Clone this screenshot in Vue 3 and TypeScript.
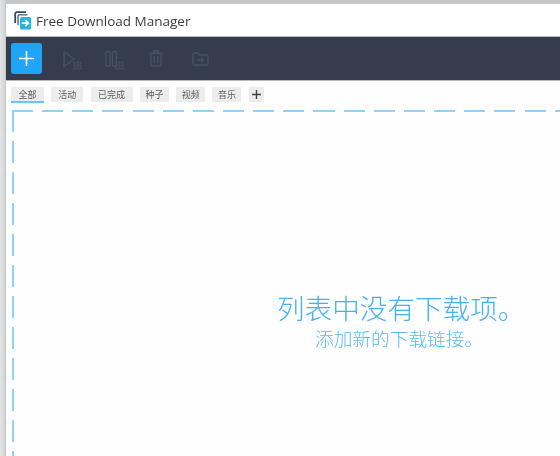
<script setup lang="ts">
const tabs: { label: string; active?: boolean; width: number }[] = [
  { label: '全部', active: true, width: 33 },
  { label: '活动', width: 32 },
  { label: '已完成', width: 42 },
  { label: '种子', width: 29 },
  { label: '视频', width: 29 },
  { label: '音乐', width: 29 },
]
const grid = [0, 3, 6]
</script>

<template>
  <div class="window-frame">
    <div class="window">
      <header class="titlebar">
        <svg class="logo" width="18" height="20" viewBox="0 0 18 20" fill="none">
          <path d="M12 1.2H3A1.8 1.8 0 0 0 1.2 3V12" stroke="#2f4a63" stroke-width="1.8" />
          <path d="M13.5 3.8H5.6A1.6 1.6 0 0 0 4 5.4V14" stroke="#52778f" stroke-width="1.5" />
          <rect x="6" y="6" width="11.2" height="12.6" rx="1.6" fill="#2cb2dc" />
          <path d="M7.8 12.2h6.4M11.4 9.2l3 3-3 3" stroke="#fff" stroke-width="1.7" />
        </svg>
        <span class="app-name">Free Download Manager</span>
      </header>

      <nav class="toolbar">
        <button class="add-btn" aria-label="add">
          <svg width="15" height="15" viewBox="0 0 15 15"><path d="M7.5 0v15M0 7.5h15" stroke="#fff" stroke-width="1.6" /></svg>
        </button>
        <svg class="tool tool-play" width="19" height="20" viewBox="0 0 19 20" fill="none">
          <path d="M1 2l10.5 7L1 16.5z" stroke="#475166" stroke-width="1.5" stroke-linejoin="round" />
          <g fill="#475166"><template v-for="x in grid" :key="x"><rect v-for="y in grid" :key="y" :x="10.5 + x" :y="11.5 + y" width="2" height="2" /></template></g>
        </svg>
        <svg class="tool tool-pause" width="19" height="20" viewBox="0 0 19 20" fill="none">
          <rect x="1" y="1.5" width="4" height="14.5" rx="1" stroke="#475166" stroke-width="1.4" />
          <rect x="7.5" y="1.5" width="4" height="14.5" rx="1" stroke="#475166" stroke-width="1.4" />
          <g fill="#475166"><template v-for="x in grid" :key="x"><rect v-for="y in grid" :key="y" :x="10.5 + x" :y="11.5 + y" width="2" height="2" /></template></g>
        </svg>
        <svg class="tool tool-trash" width="14" height="17" viewBox="0 0 14 17" fill="none" stroke="#475166" stroke-width="1.4">
          <path d="M0 3.2h14M4.5 3V1h5v2M2 3.2V16h10V3.2M5.3 6v7M8.7 6v7" />
        </svg>
        <svg class="tool tool-folder" width="17" height="14" viewBox="0 0 17 14" fill="none" stroke="#475166" stroke-width="1.4">
          <path d="M1 12V2a1 1 0 0 1 1-1h4l1.6 2H15a1 1 0 0 1 1 1v8a1 1 0 0 1-1 1H2a1 1 0 0 1-1-1zM5 8h6M9 5.8L11.2 8 9 10.2" />
        </svg>
      </nav>

      <div class="tabs">
        <span
          v-for="tab in tabs"
          :key="tab.label"
          class="tab"
          :class="{ active: tab.active }"
          :style="{ width: tab.width + 'px' }"
        >{{ tab.label }}</span>
        <span class="tab tab-add">
          <svg width="9" height="9" viewBox="0 0 9 9"><path d="M4.5 0v9M0 4.5h9" stroke="#444" stroke-width="1.4" /></svg>
        </span>
      </div>

      <main class="dropzone">
        <div class="empty">
          <div class="empty-title">列表中没有下载项。</div>
          <div class="empty-sub">添加新的下载链接。</div>
        </div>
      </main>
    </div>
  </div>
</template>

<style>
html, body { margin: 0; padding: 0; background: #fff; overflow: hidden; }
</style>

<style scoped>
.window-frame {
  width: 560px;
  height: 456px;
  box-sizing: border-box;
  padding: 4px 0 0 6px;
  overflow: hidden;
  background: linear-gradient(90deg, #e4e5e5 0, #d6d7d8 4px, #c4c6c8 6px);
  filter: blur(0.45px);
}
.window {
  height: 100%;
  display: flex;
  flex-direction: column;
  background: #fefefe;
  font-family: "Noto Sans CJK SC", "Noto Sans", sans-serif;
}
.titlebar {
  height: 32px;
  flex: none;
  display: flex;
  align-items: center;
  padding-left: 8px;
  gap: 4px;
  background: #fff;
  border-bottom: 1px solid #b9bcc0;
}
.logo { flex: none; margin-top: 2px; }
.app-name {
  font-family: "Open Sans", "Noto Sans", sans-serif;
  font-size: 13.5px;
  color: #3a3f46;
  margin-top: 1px;
}
.toolbar {
  height: 43px;
  flex: none;
  display: flex;
  align-items: center;
  background: #343c4e;
  border-bottom: 1px solid #b4b7bc;
}
.add-btn {
  width: 31px;
  height: 31px;
  margin-left: 5px;
  padding: 0;
  border: none;
  border-radius: 3px;
  background: #1fa4f6;
  display: flex;
  align-items: center;
  justify-content: center;
}
.tool { flex: none; }
.tool-play { margin: 3px 0 0 21px; }
.tool-pause { margin: 3px 0 0 23px; }
.tool-trash { margin: -1px 0 0 25px; }
.tool-folder { margin: 1px 0 0 29px; }
.tabs {
  flex: none;
  height: 16px;
  margin-top: 6px;
  padding-left: 5px;
  display: flex;
  gap: 7.3px;
}
.tab {
  box-sizing: border-box;
  height: 15px;
  background: #ececec;
  color: #5e5e5e;
  font-size: 9px;
  line-height: 15px;
  text-align: center;
  flex: none;
}
.tab.active {
  height: 16px;
  border-bottom: 2px solid #6cc4f7;
  color: #555;
}
.tab-add {
  width: 15px;
  display: flex;
  align-items: center;
  justify-content: center;
}
.dropzone {
  flex: 1;
  margin: 7px 0 0 6px;
  padding-top: 179px;
  background-image:
    repeating-linear-gradient(90deg, #8fd3fb 0 21px, transparent 21px 30.15px),
    repeating-linear-gradient(180deg, #8fd3fb 0 22px, transparent 22px 31px);
  background-size: 100% 2px, 2px 100%;
  background-position: 0 0, 0 0;
  background-repeat: no-repeat;
}
.empty {
  margin-left: 265px;
  width: 240px;
  color: #45b1f6;
  white-space: nowrap;
}
.empty-title {
  font-size: 27.6px;
  line-height: 36px;
  font-weight: 300;
}
.empty-sub {
  font-size: 18.7px;
  line-height: 26px;
  margin-left: 38px;
  font-weight: 300;
  color: #5bbaf6;
}
</style>
